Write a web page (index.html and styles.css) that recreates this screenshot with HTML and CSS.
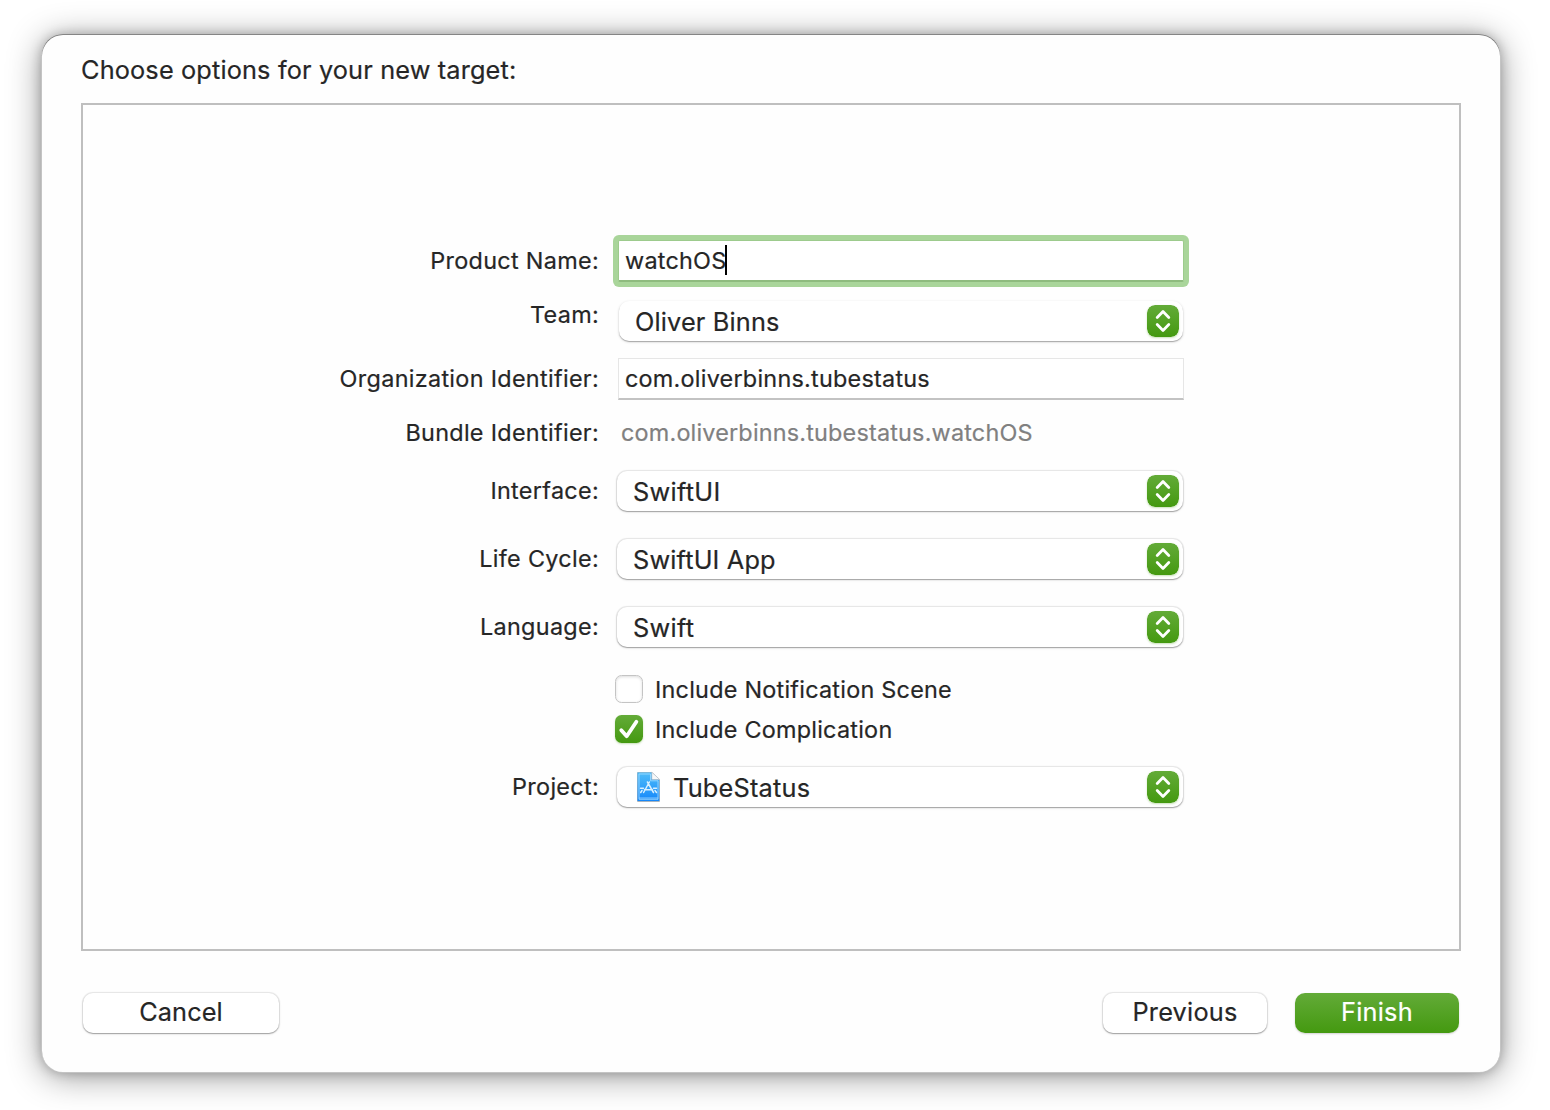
FILE: index.html
```html
<!DOCTYPE html>
<html lang="en">
<head>
<meta charset="utf-8">
<title>New Target</title>
<link rel="stylesheet" href="styles.css">
</head>
<body>
<svg class="defs" width="0" height="0" aria-hidden="true">
  <defs>
    <linearGradient id="green" x1="0" y1="0" x2="0" y2="1"><stop offset="0" stop-color="#63ab38"/><stop offset="1" stop-color="#449910"/></linearGradient>
    <linearGradient id="blue" x1="0" y1="0" x2="0" y2="1"><stop offset="0" stop-color="#4fbdf9"/><stop offset="1" stop-color="#1487fa"/></linearGradient>
    <symbol id="stepper" viewBox="0 0 32 32">
      <rect width="32" height="32" rx="8" fill="url(#green)"/>
      <path d="M10.2 12.4 16 6.6l5.8 5.8M10.2 19.600l5.8 5.8 5.8-5.8" fill="none" stroke="#fff" stroke-width="2.800" stroke-linecap="round" stroke-linejoin="round"/>
    </symbol>
  </defs>
</svg>
<main class="dialog">
  <h1 class="title">Choose options for your new target:</h1>
  <section class="panel">
    <div class="row row-name">
      <span class="label">Product Name:</span>
      <div class="field focused">watchOS<span class="caret"></span></div>
    </div>
    <div class="row row-team">
      <span class="label">Team:</span>
      <div class="popup popup-team">Oliver Binns<svg class="stepper"><use href="#stepper"/></svg></div>
    </div>
    <div class="row row-org">
      <span class="label">Organization Identifier:</span>
      <div class="field">com.oliverbinns.tubestatus</div>
    </div>
    <div class="row row-bundle">
      <span class="label">Bundle Identifier:</span>
      <span class="static">com.oliverbinns.tubestatus.watchOS</span>
    </div>
    <div class="row row-interface">
      <span class="label">Interface:</span>
      <div class="popup swift">SwiftUI<svg class="stepper"><use href="#stepper"/></svg></div>
    </div>
    <div class="row row-popup">
      <span class="label">Life Cycle:</span>
      <div class="popup">SwiftUI App<svg class="stepper"><use href="#stepper"/></svg></div>
    </div>
    <div class="row row-popup">
      <span class="label">Language:</span>
      <div class="popup swift">Swift<svg class="stepper"><use href="#stepper"/></svg></div>
    </div>
    <div class="row row-check">
      <span class="label"></span>
      <span class="box"></span>
      <span class="check-label">Include Notification Scene</span>
    </div>
    <div class="row row-check-next">
      <span class="label"></span>
      <span class="box checked"><svg width="28" height="28" viewBox="0 0 28 28"><path d="M6.3 15.2 11.7 21.2 21.4 6.8" fill="none" stroke="#fff" stroke-width="3.8" stroke-linecap="round" stroke-linejoin="round"/></svg></span>
      <span class="check-label">Include Complication</span>
    </div>
    <div class="row row-project">
      <span class="label">Project:</span>
      <div class="popup popup-project">
        <svg class="doc" width="26" height="32" viewBox="0 0 26 32">
          <path d="M1.5 1.5H16l7.500 7.500V30.500H1.500Z" fill="#fff" stroke="#a9b4bd" stroke-width="1"/>
          <path d="M1.500 1.500H15.500L23.300 9.200V30H1.500Z" fill="url(#blue)"/>
          <path d="M3 28.300V3H14.500V9.800H22V28.300ZM3 27H22" fill="none" stroke="#a5dcff" stroke-width=".8"/>
          <path d="M15.800 1.200V8.500H23.700Z" fill="#f7f8f9" stroke="#a9b4bd" stroke-width=".6"/>
          <path d="M13.400 11 7.600 21.500M11.400 11 17.500 21.500M8.500 18.800H16.500M4.500 17.200H7.500M17.500 17.200H20.500M4.700 21.500 6 19.500M20.500 21.500 19 19.500" fill="none" stroke="#d8f0ff" stroke-width="1.500" stroke-linecap="round"/>
        </svg>
        TubeStatus<svg class="stepper"><use href="#stepper"/></svg>
      </div>
    </div>
  </section>
  <footer class="actions">
    <button class="btn cancel">Cancel</button>
    <button class="btn previous">Previous</button>
    <button class="btn finish">Finish</button>
  </footer>
</main>
</body>
</html>
```
FILE: styles.css
```css
* { box-sizing: border-box; }
body {
  margin: 0;
  height: 1110px;
  padding: 35px 50px 0 42px;
  overflow: hidden;
  background: #fff;
  color: #262626;
  font-family: Inter, "Liberation Sans", sans-serif;
  -webkit-text-stroke: .2px currentColor;
}
.defs { position: absolute; }
.dialog {
  height: 1037px;
  padding: 19px 39px 0;
  background: #fefefe;
  border-radius: 21px;
  box-shadow: 0 -.8px 0 0 #707070, 0 0 0 1px #c4c4c4, 0 0 12px rgba(0,0,0,.26), 0 4px 34px rgba(0,0,0,.42);
}
.title {
  margin: 0;
  height: 49px;
  font-size: 25.3px;
  font-weight: 400;
  line-height: 32px;
  letter-spacing: .15px;
  white-space: nowrap;
}
.panel {
  width: 1380px;
  height: 848px;
  padding-top: 135px;
  border: 2px solid #bfbfbf;
}
.row {
  display: flex;
  height: 40px;
  align-items: center;
  font-size: 23.4px;
  line-height: 28px;
  letter-spacing: .24px;
  white-space: nowrap;
}
.label {
  flex: none;
  width: 517px;
  padding-right: 1px;
  text-align: right;
  letter-spacing: .31px;
}
.row-name { height: 42px; }
.row-team { margin-top: 19px; }
.row-team .label { padding-bottom: 13px; }
.row-org { height: 42px; margin-top: 17px; }
.row-bundle { height: 30px; margin-top: 18px; }
.row-interface { margin-top: 23px; }
.row-popup { margin-top: 28px; }
.row-check { height: 28px; margin-top: 28px; }
.row-check-next { height: 28px; margin-top: 12px; }
.row-project { margin-top: 24px; }

.field {
  display: flex;
  align-items: center;
  width: 566px;
  height: 42px;
  margin-left: 18px;
  padding-left: 6px;
  background: #fff;
  border: 1px solid #e6e6e6;
  border-bottom: 2px solid #c3c3c3;
}
.focused {
  border: 1px solid #9dcb8d;
  border-bottom: 2px solid #8ebb7e;
  box-shadow: 0 0 0 5px #a9d59a;
  border-radius: 2px;
}
.caret { width: 2px; height: 30px; margin: -2px 0 0 -1px; background: #000; }
.static { margin-left: 21px; color: #808080; letter-spacing: .19px; }

.popup {
  display: flex;
  align-items: center;
  width: 566px;
  height: 40px;
  margin-left: 17px;
  padding: 1px 4px 0 16px;
  background: #fff;
  border-radius: 10px;
  box-shadow: 0 0 1px 1px rgba(0,0,0,.09), 0 1px 1px rgba(0,0,0,.24), 0 1px 3px rgba(0,0,0,.10);
  font-size: 25.3px;
  letter-spacing: .16px;
}
.swift { letter-spacing: .3px; }
.popup-team {
  width: 564px;
  margin-left: 19px;
  box-shadow: 0 1px 1px rgba(0,0,0,.26), 0 1px 3px rgba(0,0,0,.16);
}
.popup-project { padding-left: 19px; letter-spacing: .22px; }
.stepper {
  width: 32px;
  height: 32px;
  margin: -1px 0 0 auto;
  border-radius: 8px;
  box-shadow: 0 1px 2px rgba(68,153,16,.3);
}
.doc { margin: -1px 11px 0 0; }

.box {
  width: 28px;
  height: 28px;
  margin-left: 15px;
  border: 1px solid #c4c4c4;
  border-radius: 6.500px;
  background: #fff;
  box-shadow: inset 0 1px 3px rgba(0,0,0,.14);
}
.checked {
  border: 0;
  background: linear-gradient(#63ab38, #449910);
  box-shadow: 0 1px 2px rgba(68,153,16,.3);
}
.checked svg { display: block; }
.check-label { margin-left: 12px; padding-top: 1px; }

.actions { display: flex; margin-top: 42px; }
.btn {
  height: 40px;
  padding: 0 0 3px;
  border: 0;
  border-radius: 10px;
  background: #fff;
  box-shadow: 0 0 1px 1px rgba(0,0,0,.09), 0 1px 1px rgba(0,0,0,.24), 0 1px 3px rgba(0,0,0,.10);
  color: #262626;
  font: 25.3px/32px Inter, "Liberation Sans", sans-serif;
  letter-spacing: .22px;
}
.cancel { width: 196px; margin-left: 2px; letter-spacing: .1px; }
.previous { width: 164px; margin-left: auto; }
.finish {
  width: 164px;
  margin: 0 2px 0 28px;
  background: linear-gradient(#63ab38, #449910);
  box-shadow: 0 1px 2px rgba(0,0,0,.18);
  color: #fff;
}
```
